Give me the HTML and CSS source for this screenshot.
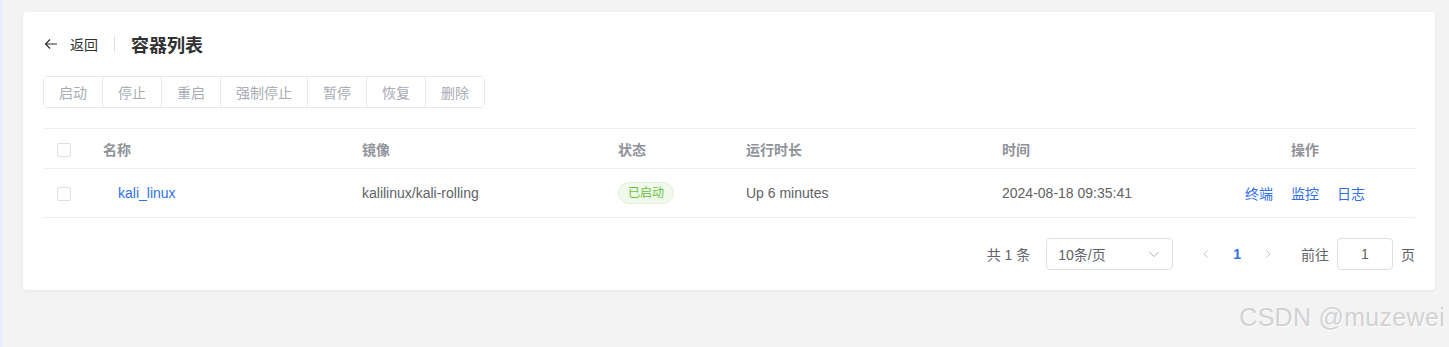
FILE: index.html
```html
<!DOCTYPE html>
<html lang="zh-CN">
<head>
  <meta charset="UTF-8">
  <title>容器列表</title>
  <link rel="stylesheet" href="styles.css">
</head>
<body>

<div class="main">
  <div class="card">
    <!-- page header -->
    <div class="page-header">
      <div class="back">
        <svg class="back-icon" width="14" height="14" viewBox="0 0 14 14"><path d="M13 7H1.5M6 2.5L1.5 7L6 11.5" fill="none" stroke="#303133" stroke-width="1.2"/></svg>
        <span>返回</span>
      </div>
      <div class="divider"></div>
      <div class="title">容器列表</div>
    </div>

    <!-- actions -->
    <div class="btn-group">
      <button disabled>启动</button>
      <button disabled>停止</button>
      <button disabled>重启</button>
      <button disabled>强制停止</button>
      <button disabled>暂停</button>
      <button disabled>恢复</button>
      <button disabled>删除</button>
    </div>

    <table class="table">
      <colgroup>
        <col style="width:48px">
        <col style="width:259px">
        <col style="width:256px">
        <col style="width:128px">
        <col style="width:256px">
        <col style="width:205px">
        <col style="width:220px">
      </colgroup>
      <thead>
        <tr>
          <th class="sel"><span class="checkbox"></span></th>
          <th>名称</th>
          <th>镜像</th>
          <th>状态</th>
          <th>运行时长</th>
          <th>时间</th>
          <th class="center">操作</th>
        </tr>
      </thead>
      <tbody>
        <tr>
          <td class="sel"><span class="checkbox"></span></td>
          <td class="name"><a href="#">kali_linux</a></td>
          <td>kalilinux/kali-rolling</td>
          <td><span class="tag">已启动</span></td>
          <td>Up 6 minutes</td>
          <td>2024-08-18 09:35:41</td>
          <td class="center ops"><a href="#">终端</a><a href="#">监控</a><a href="#">日志</a></td>
        </tr>
      </tbody>
    </table>

    <div class="pagination">
      <span class="total">共 1 条</span>
      <div class="select">
        <span>10条/页</span>
        <svg width="12" height="12" viewBox="0 0 12 12"><path d="M1.5 4L6 8.5L10.5 4" fill="none" stroke="#a8abb2" stroke-width="1"/></svg>
      </div>
      <div class="pager">
        <svg width="10" height="10" viewBox="0 0 10 10"><path d="M6.5 1.5L3 5L6.5 8.5" fill="none" stroke="#c0c4cc" stroke-width="1"/></svg>
        <span class="page-num">1</span>
        <svg width="10" height="10" viewBox="0 0 10 10"><path d="M3.5 1.5L7 5L3.5 8.5" fill="none" stroke="#c0c4cc" stroke-width="1"/></svg>
      </div>
      <span class="goto">前往</span>
      <div class="page-input">1</div>
      <span>页</span>
    </div>
  </div>
</div>

<div class="watermark">CSDN @muzewei</div>

</body>
</html>
```

FILE: styles.css
```css
body {
  margin: 0;
  padding: 0;
  background-color: #f3f3f3;
  font-family: "Liberation Sans", "Noto Sans CJK SC", sans-serif;
  font-size: 14px;
  color: #606266;
  height: 347px;
  overflow: hidden;
  border-left: 3px solid #e8effb;
  box-sizing: border-box;
}
.main {
  padding: 12px 14px 0 20px;
}
.card {
  background: #fff;
  border-radius: 4px;
  box-shadow: 0 1px 3px rgba(0, 0, 0, 0.06);
  padding: 20px 20px 20px 20px;
  height: 238px;
}
.page-header {
  display: flex;
  align-items: center;
  height: 24px;
}
.back {
  display: flex;
  align-items: center;
  color: #303133;
  font-size: 14px;
}
.back-icon {
  margin: 0 12px 0 1px;
}
.divider {
  width: 1px;
  height: 16px;
  background: #dcdfe6;
  margin: 0 16px;
}
.title {
  font-size: 18px;
  font-weight: bold;
  color: #303133;
}
.btn-group {
  display: inline-flex;
  margin-top: 20px;
  border: 1px solid #e4e7ed;
  border-radius: 4px;
}
.btn-group button {
  font-family: inherit;
  font-size: 14px;
  color: #a8abb2;
  background: #fff;
  border: none;
  border-right: 1px solid #e4e7ed;
  height: 30px;
  padding: 0 15px;
  cursor: not-allowed;
}
.btn-group button:last-child {
  border-right: none;
}
.table {
  width: 1372px;
  margin-top: 20px;
  border-collapse: collapse;
  table-layout: fixed;
}
.table th, .table td {
  text-align: left;
  padding: 0 12px;
  border-top: 1px solid #ebeef5;
  white-space: nowrap;
}
.table th {
  height: 39px;
  color: #909399;
  font-weight: bold;
}
.table td {
  height: 48px;
  border-bottom: 1px solid #ebeef5;
}
.table .sel {
  padding-left: 14px;
}
.table .center {
  text-align: center;
}
.checkbox {
  display: inline-block;
  width: 12px;
  height: 12px;
  border: 1px solid #dcdfe6;
  border-radius: 2px;
  vertical-align: middle;
}
.name {
  padding-left: 27px !important;
}
a {
  color: #2f6fe8;
  text-decoration: none;
}
.ops a {
  margin: 0 9px;
}
.tag {
  display: inline-block;
  height: 22px;
  line-height: 20px;
  padding: 0 9px;
  font-size: 12px;
  color: #67c23a;
  background: #f0f9eb;
  border: 1px solid #e1f3d8;
  border-radius: 12px;
  box-sizing: border-box;
}
.pagination {
  display: flex;
  justify-content: flex-end;
  align-items: center;
  margin-top: 20px;
  padding-right: 0;
  color: #606266;
}
.total {
  margin-right: 16px;
}
.select {
  display: flex;
  align-items: center;
  justify-content: space-between;
  width: 127px;
  height: 32px;
  box-sizing: border-box;
  border: 1px solid #dcdfe6;
  border-radius: 4px;
  padding: 0 12px 0 11px;
}
.pager {
  display: flex;
  align-items: center;
  margin-left: 28px;
  gap: 22px;
}
.page-num {
  color: #2f6fe8;
  font-weight: bold;
}
.goto {
  margin-left: 28px;
  margin-right: 8px;
}
.page-input {
  width: 56px;
  height: 32px;
  line-height: 30px;
  box-sizing: border-box;
  border: 1px solid #dcdfe6;
  border-radius: 4px;
  text-align: center;
  margin-right: 8px;
}
.watermark {
  position: absolute;
  right: 4px;
  top: 303px;
  font-size: 25px;
  color: #d2d2d2;
  text-shadow: 1px 1px 1px rgba(255, 255, 255, 0.8);
  letter-spacing: 0.3px;
}
```
